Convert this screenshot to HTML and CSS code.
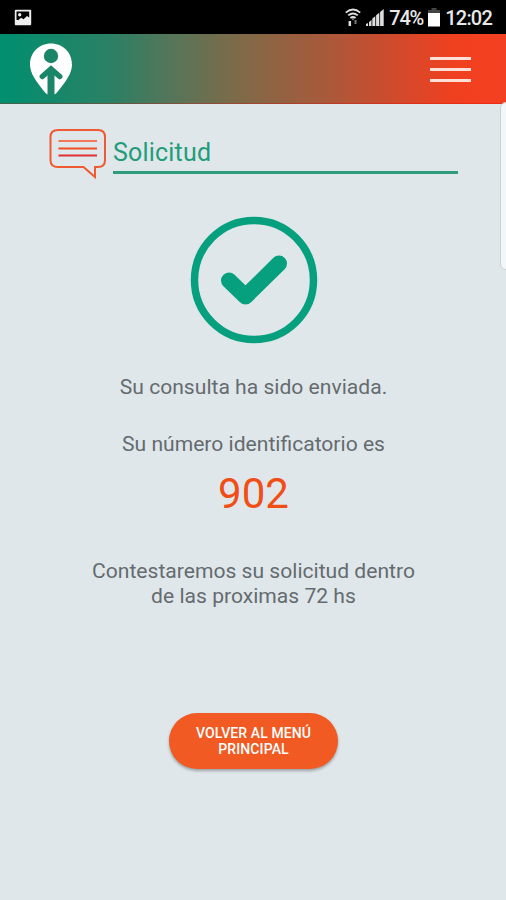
FILE: index.html
```html
<!DOCTYPE html>
<html lang="es">
<head>
  <meta charset="UTF-8" />
  <meta name="viewport" content="width=device-width, initial-scale=1.0" />
  <title>Solicitud</title>
  <link rel="stylesheet" href="styles.css">
</head>
<body>
  <div class="status-bar">
    <svg class="status-picture" width="18" height="17" viewBox="0 0 18 17">
      <rect x="0.8" y="0.8" width="16.4" height="15.4" rx="1" fill="#eee" />
      <path d="M2.5 2.5h12.7v6l-2.2-1.5-3.5 3.2-2.5-1.4-2.5 2.2h-2z" fill="#000" />
      <circle cx="5.7" cy="5.8" r="1.7" fill="#eee" />
    </svg>
    <div class="status-right">
      <svg class="wifi" width="16" height="19" viewBox="0 0 16 19" fill="none" stroke="#ddd" stroke-width="1.8">
        <path d="M0.8 4.6Q8-1.6 15.2 4.6M3.2 7.4Q8 3.6 12.8 7.4M5.4 10Q8 8 10.6 10" />
        <path d="M7 10.5h2l-1 2z" fill="#ddd" stroke="none" />
        <path d="M4.8 13v5" stroke-width="2.5" />
        <path d="M10.5 12v4" stroke="#777" stroke-width="2" />
      </svg>
      <svg class="signal" width="18" height="18" viewBox="0 0 18 18" fill="#ddd">
        <path d="M0 18v-2l2-1v3zM3 18v-4l2.5-2v6zM6.300 18v-7.500l3-2.300v9.800zM10.100 18V7.300l3.200-2.500V18zM14.100 18V4L17.700 1v17z" />
      </svg>
      <span class="percent">74%</span>
      <svg class="battery" width="12" height="19" viewBox="0 0 12 19">
        <path d="M3.500 0h5v2H12v4H0V2h3.500z" fill="#444" />
        <rect y="5" width="12" height="13.500" fill="#fff" />
      </svg>
      <span class="clock">12:02</span>
    </div>
  </div>

  <header class="header">
    <svg class="logo" width="44" height="52" viewBox="0 0 44 52">
      <path d="M22 0.500C10 0.500 1 9.500 1 21.500C1 31 8 39 14 47Q16.500 50.500 18.500 51.500H25.500Q27.500 50.500 30 47C36 39 43 31 43 21.500C43 9.500 34 0.500 22 0.500Z" fill="#fff" />
      <g fill="none" stroke="#1a8568">
        <circle cx="22" cy="13" r="7.200" fill="#1a8568" stroke="none" />
        <path d="M13.300 33.500L22 26L30.700 33.500" stroke-width="5.500" stroke-linecap="round" />
        <path d="M22 26v26" stroke-width="7" />
      </g>
    </svg>
    <div class="menu">
      <span></span>
      <span></span>
      <span></span>
    </div>
  </header>

  <main class="content">
    <div class="side-tab"></div>
    <div class="title-row">
      <svg class="chat" width="58" height="52" viewBox="0 0 58 52" fill="none" stroke="#f05a32" stroke-width="2">
        <path d="M9 2H49Q56 2 56 9V32Q56 39 49 39H46V49L34.500 39H9Q1.500 39 1.500 32V9Q1.500 2 9 2Z" />
        <path d="M9.500 13H48" stroke="#f47558" />
        <path d="M9.500 20.500H48" stroke="#f05020" />
        <path d="M9.500 27.500H48" stroke="#e02f35" />
      </svg>
      <h1 class="title">Solicitud</h1>
    </div>

    <svg class="check" width="128" height="128" viewBox="0 0 128 128" fill="none" stroke="#07a07e">
      <circle cx="64" cy="64" r="59.500" stroke-width="7.500" />
      <path d="M39 64.500L55.500 80.500L89 47.500" stroke-width="16" stroke-linecap="round" stroke-linejoin="round" />
    </svg>

    <p class="sent">Su consulta ha sido enviada.</p>
    <p class="label">Su número identificatorio es</p>
    <p class="number">902</p>
    <p class="reply">Contestaremos su solicitud dentro<br>de las proximas 72 hs</p>

    <button class="back">VOLVER AL MENÚ<br>PRINCIPAL</button>
  </main>
</body>
</html>
```
FILE: styles.css
```css
* { box-sizing: border-box; }
body { margin: 0; height: 900px; overflow: hidden; font-family: Roboto, sans-serif; background: #dfe7eb; color: #656b6e; }

.status-bar { height: 34px; padding: 0 14px; background: #000; color: #e8e8e8; display: flex; align-items: center; justify-content: space-between; }
.status-right { display: flex; align-items: center; }
.wifi { margin-right: 5px; }
.signal { margin-right: 5px; }
.percent { width: 34px; margin-right: 5px; padding-top: 2px; font-size: 20px; font-weight: 500; letter-spacing: -1.2px; white-space: nowrap; }
.battery { margin-right: 5px; }
.clock { padding-top: 2px; font-size: 20px; font-weight: 500; letter-spacing: -0.8px; }

.header { height: 70px; padding: 1px 35px 0 29px; display: flex; align-items: center; justify-content: space-between; background: linear-gradient(90deg, #008f70 0%, #2b8064 22%, #53765a 33%, #7e6a48 47%, #a75a3b 64%, #d04a2c 78%, #f04020 90%, #f44022 100%); border-bottom: 1px solid rgba(220, 0, 0, 0.3); }
.menu { width: 41px; display: flex; flex-direction: column; gap: 8px; }
.menu span { height: 3px; background: #ffe0d8; }

.content { position: relative; height: 796px; padding-top: 24px; display: flex; flex-direction: column; align-items: center; text-align: center; }
.side-tab { position: absolute; top: -2px; right: -6px; width: 12px; height: 168px; background: #f3f7fa; border: 1px solid #cbd2d5; border-radius: 6px; }

.title-row { width: 409px; margin-right: -1px; display: flex; align-items: flex-start; gap: 6px; }
.title { flex: 1; height: 46px; margin: 0; padding-top: 9px; border-bottom: 3px solid #2f9c7b; color: #229c79; font-size: 25px; line-height: 32px; font-weight: 400; letter-spacing: 0.2px; text-align: left; }

.check { margin-top: 36px; margin-right: -1px; }

p { margin: 0 -1px 0 0; font-size: 21.1px; line-height: 25px; }
.sent { margin-top: 30px; }
.label { margin-top: 32px; }
.number { margin-top: 11px; color: #f04e16; font-size: 42px; line-height: 54px; }
.reply { margin-top: 37px; }

.back { width: 169px; height: 56px; margin-top: 105px; padding: 0 0 0 1px; border: none; border-radius: 28px; background: #f15a22; color: #fff; font-family: inherit; font-size: 14px; line-height: 16px; font-weight: 500; letter-spacing: 0.1px; box-shadow: 0 2px 3px rgba(0, 0, 0, 0.3); cursor: pointer; }
```
